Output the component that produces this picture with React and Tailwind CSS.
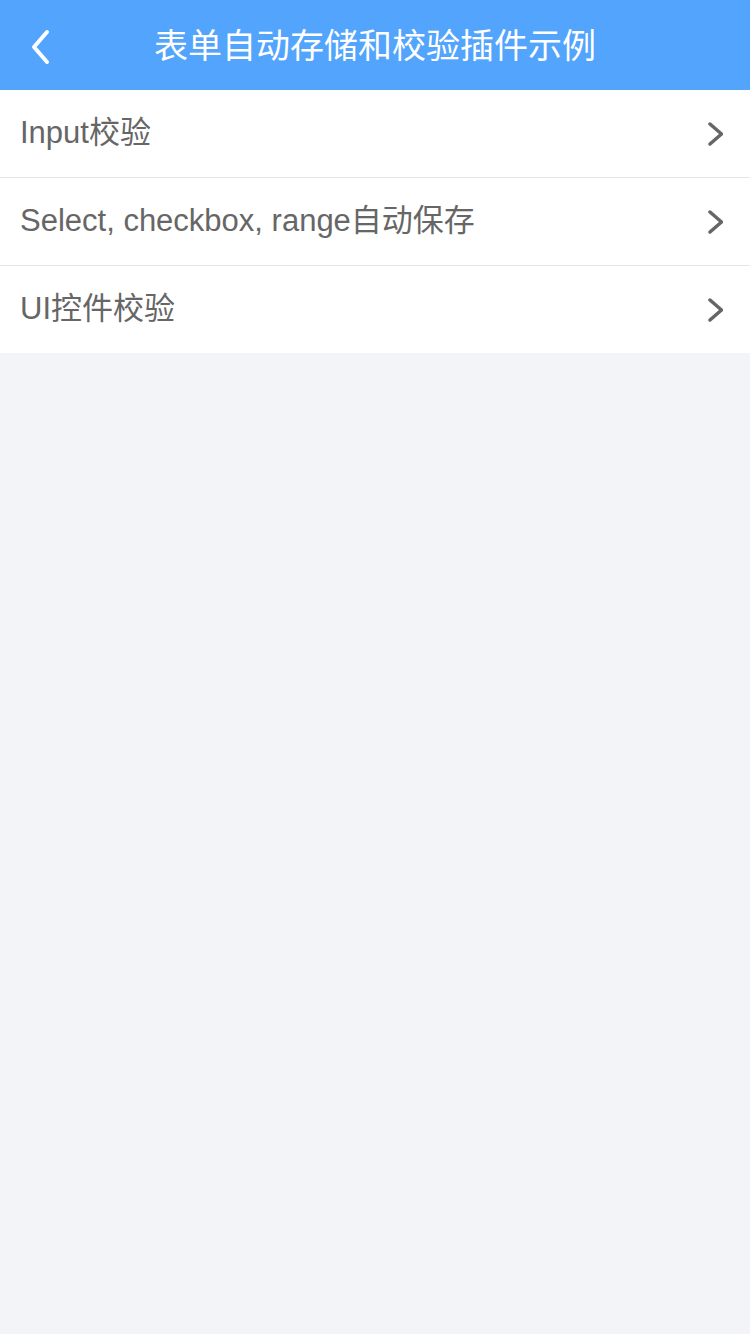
const rows = ["Input校验", "Select, checkbox, range自动保存", "UI控件校验"];

function Chevron({ className }) {
  return (
    <svg viewBox="0 0 16 24" className={className} fill="none">
      <path d="M3 2 L14.5 12 L3 22" stroke="currentColor" strokeWidth="3.5" strokeLinecap="round" strokeLinejoin="round" />
    </svg>
  );
}

export default function App() {
  return (
    <div
      className="min-h-[1334px] bg-[#f2f4f8]"
      style={{ fontFamily: '"Liberation Sans", "Noto Sans CJK SC", sans-serif' }}
    >
      {/* header */}
      <div className="relative flex h-[90px] items-center justify-center bg-[#52a4fd]">
        <button className="absolute left-[30px] top-[28px] text-white" aria-label="Back">
          <svg viewBox="0 0 20 38" className="h-[38px] w-[20px]" fill="none">
            <path d="M17 4 L4 19 L17 34" stroke="currentColor" strokeWidth="4" strokeLinecap="round" strokeLinejoin="round" />
          </svg>
        </button>
        <h1 className="pt-[2px] text-[34px] font-normal text-white">表单自动存储和校验插件示例</h1>
      </div>

      {/* list */}
      <ul className="bg-white">
        {rows.map((r, i) => (
          <li
            key={r}
            className={
              "flex items-center justify-between pl-[20px] pr-[27px] " +
              (i < rows.length - 1 ? "h-[88px] border-b border-[#e6e6e6]" : "h-[87px]")
            }
          >
            <span className="text-[31px] text-[#666666]">{r}</span>
            <Chevron className="h-[24px] w-[16px] text-[#666666]" />
          </li>
        ))}
      </ul>
    </div>
  );
}
